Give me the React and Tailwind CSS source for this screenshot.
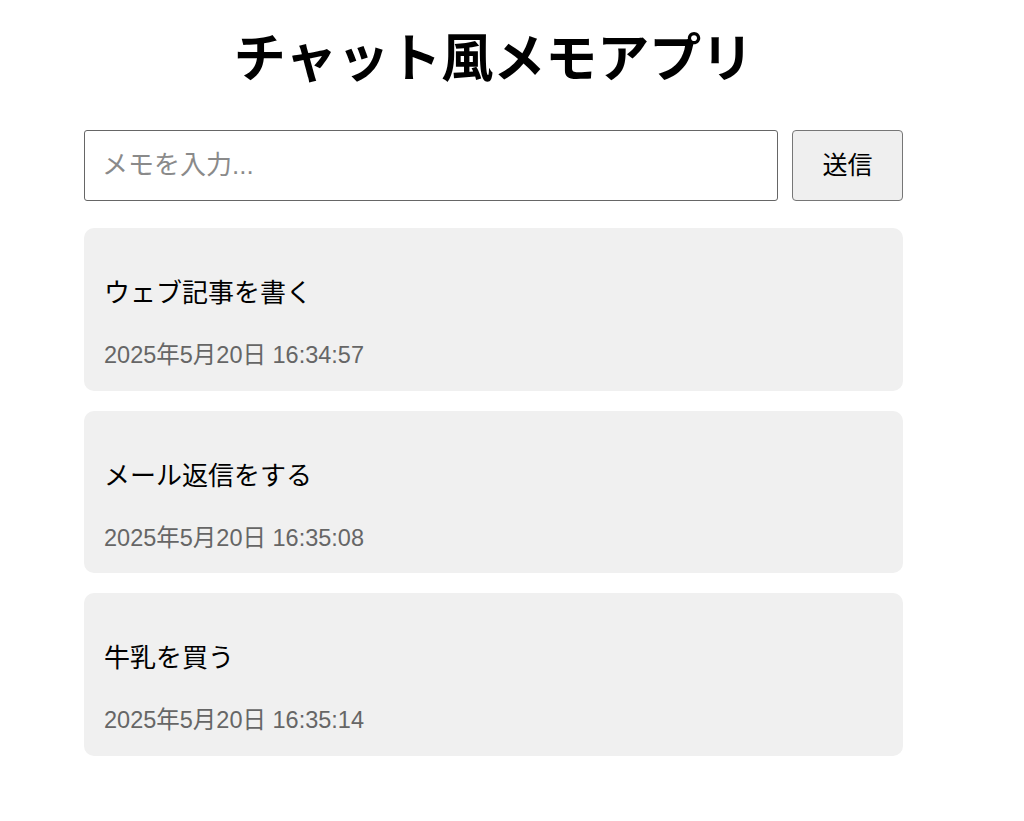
import React, { useState } from 'react';

const initialMemos = [
  { id: 1, text: 'ウェブ記事を書く', date: '2025年5月20日 16:34:57' },
  { id: 2, text: 'メール返信をする', date: '2025年5月20日 16:35:08' },
  { id: 3, text: '牛乳を買う', date: '2025年5月20日 16:35:14' },
];

const MemoCard = ({ memo }) => (
  <div className="bg-[#f0f0f0] rounded-[10px] px-[20px] pt-[47px] pb-[20.5px]">
    <p className="text-[26px] leading-[36px] text-black">{memo.text}</p>
    <p className="mt-[29px] text-[23.5px] leading-[30px] text-[#666666]">{memo.date}</p>
  </div>
);

const App = () => {
  const [memos, setMemos] = useState(initialMemos);
  const [input, setInput] = useState('');

  const handleSend = () => {
    if (!input.trim()) return;
    setMemos([...memos, { id: Date.now(), text: input, date: new Date().toLocaleString('ja-JP') }]);
    setInput('');
  };

  return (
    <div className="min-h-[821px] bg-white font-['Liberation_Sans','Noto_Sans_CJK_JP',sans-serif]">
      <div className="ml-[84px] w-[819px] pt-[25px]">
        <h1 className="text-center text-[52px] leading-[60px] font-bold text-black font-['Noto_Sans_CJK_JP',sans-serif]">
          チャット風メモアプリ
        </h1>

        <div className="mt-[45px] flex gap-[14px]">
          <input
            type="text"
            placeholder="メモを入力..."
            value={input}
            onChange={(e) => setInput(e.target.value)}
            className="flex-1 h-[71px] px-[17px] text-[26px] border border-[#666666] rounded-[3px] outline-none placeholder:text-[#8a8a8a]"
          />
          <button
            onClick={handleSend}
            className="w-[111px] h-[71px] bg-[#efefef] border border-[#767676] rounded-[4px] text-[25px] text-black"
          >
            送信
          </button>
        </div>

        <div className="mt-[27px] flex flex-col gap-[20px]">
          {memos.map((memo) => (
            <MemoCard key={memo.id} memo={memo} />
          ))}
        </div>
      </div>
    </div>
  );
};

export default App;
